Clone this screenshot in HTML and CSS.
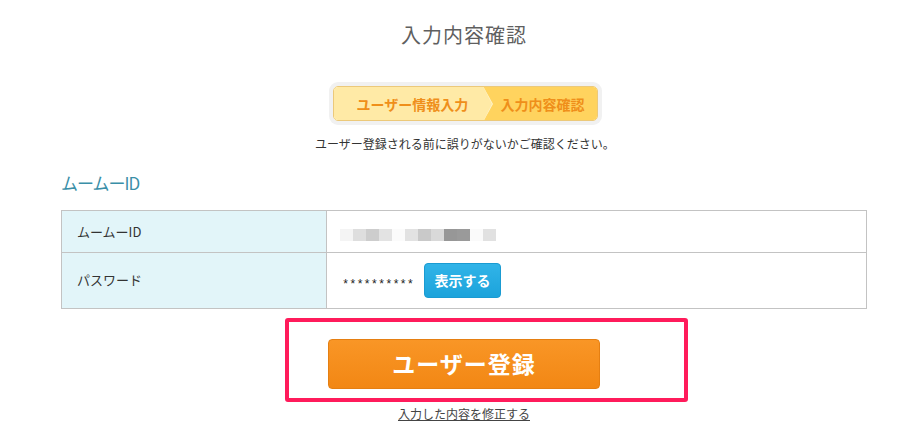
FILE: index.html
```html
<!DOCTYPE html>
<html lang="ja">
<head>
<meta charset="utf-8">
<title>入力内容確認</title>
<link rel="stylesheet" href="styles.css">
</head>
<body>
<div class="page">
  <h1 class="title">入力内容確認</h1>
  <div class="steps-wrap">
    <div class="steps">
      <div class="step step-done">ユーザー情報入力</div>
      <div class="step step-current">入力内容確認</div>
    </div>
  </div>
  <p class="lead">ユーザー登録される前に誤りがないかご確認ください。</p>
  <h2 class="section-title">ムームーID</h2>
  <table class="confirm">
    <tr class="row-id">
      <th>ムームーID</th>
      <td>
        <div class="blur">
          <span class="px" style="background:#f4f4f4"></span><span class="px" style="background:#dedede"></span><span class="px" style="background:#cdcdcd"></span><span class="px" style="background:#e3e3e3"></span><span class="px" style="background:#fbfbfb"></span><span class="px" style="background:#e2e2e2"></span><span class="px" style="background:#c9c9c9"></span><span class="px" style="background:#d9d9d9"></span><span class="px" style="background:#979797"></span><span class="px" style="background:#9a9a9a"></span><span class="px" style="background:#fafafa"></span><span class="px" style="background:#e1e1e1"></span>
        </div>
      </td>
    </tr>
    <tr class="row-pw">
      <th>パスワード</th>
      <td>
        <div class="pw">
          <span class="stars">**********</span>
          <button class="btn-show" type="button">表示する</button>
        </div>
      </td>
    </tr>
  </table>
  <div class="actions">
    <div class="highlight"></div>
    <button class="btn-register" type="button">ユーザー登録</button>
    <a class="back-link" href="#">入力した内容を修正する</a>
  </div>
</div>
</body>
</html>
```

FILE: styles.css
```css
* { box-sizing: border-box; }
body {
  margin: 0;
  background: #fff;
  font-family: "Noto Sans CJK JP", "Noto Sans", sans-serif;
  color: #333;
}
.page {
  width: 806px;
  margin-left: 61px;
}
.title {
  margin: 0;
  padding-top: 25px;
  font-size: 20px;
  line-height: 20px;
  font-weight: normal;
  letter-spacing: 1px;
  color: #5f5f5f;
  text-align: center;
}
.steps-wrap {
  display: flex;
  justify-content: center;
  margin-top: 41px;
  padding-left: 2px;
}
.steps {
  display: flex;
  height: 35px;
  border: 1px solid #ecc97a;
  border-radius: 5px;
  box-shadow: 0 0 0 4px #f1f1f1;
  overflow: hidden;
}
.step {
  display: flex;
  align-items: center;
  font-size: 14px;
  font-weight: bold;
  color: #ef8f1a;
  white-space: nowrap;
}
.step-done {
  position: relative;
  width: 149px;
  padding-left: 23px;
  background: #ffeaa6;
  z-index: 1;
}
.step-done::before,
.step-done::after {
  content: "";
  position: absolute;
  top: -1px;
  border-style: solid;
  border-color: transparent;
}
.step-done::before {
  right: -10px;
  border-width: 18px 0 18px 10px;
  border-left-color: #fff4cf;
}
.step-done::after {
  right: -9px;
  border-width: 18px 0 18px 9px;
  border-left-color: #ffeaa6;
}
.step-current {
  width: 114px;
  padding-left: 18px;
  background: #ffd35e;
}
.lead {
  margin: 15px 0 0;
  font-size: 12px;
  line-height: 16px;
  text-align: center;
  padding-left: 2px;
}
.section-title {
  margin: 21px 0 0;
  font-size: 17px;
  line-height: 20px;
  font-weight: normal;
  color: #3a8fa8;
  letter-spacing: -1px;
}
.confirm {
  margin-top: 17px;
  width: 806px;
  border-collapse: collapse;
}
.confirm th,
.confirm td {
  border: 1px solid #c3c3c3;
  padding: 0;
  font-size: 13px;
  font-weight: normal;
  text-align: left;
  vertical-align: middle;
}
.confirm th {
  width: 265px;
  background: #e2f5f9;
  padding-left: 15px;
  color: #333;
}
.confirm td {
  padding-left: 13px;
}
.row-id th, .row-id td { height: 42px; }
.row-pw th, .row-pw td { height: 56px; }
.row-pw th { padding-bottom: 2px; }
.blur {
  display: flex;
  margin-top: 6px;
}
.px {
  display: block;
  width: 13px;
  height: 12px;
}
.pw {
  display: flex;
  align-items: center;
  gap: 10px;
  padding-left: 2px;
}
.stars {
  font-family: "Liberation Mono", monospace;
  font-size: 12px;
  line-height: 12px;
  color: #222;
  padding-top: 8px;
}
.btn-show {
  width: 77px;
  height: 35px;
  padding: 0 0 2px;
  border: 1px solid #1a9bd2;
  border-radius: 4px;
  background: linear-gradient(#31b4e8, #1ca3db);
  color: #fff;
  font-family: inherit;
  font-size: 14px;
  font-weight: bold;
}
.actions {
  position: relative;
  display: flex;
  flex-direction: column;
  align-items: center;
  padding-top: 30px;
}
.highlight {
  position: absolute;
  left: 224px;
  top: 9px;
  width: 403px;
  height: 84px;
  border: 4px solid #ff1b5b;
  border-radius: 3px;
}
.btn-register {
  width: 272px;
  height: 50px;
  padding: 0 0 2px;
  border: 1px solid #e57f12;
  border-radius: 4px;
  background: linear-gradient(#f99626, #f28714);
  color: #fff;
  font-family: inherit;
  font-size: 23px;
  font-weight: bold;
  letter-spacing: 1px;
}
.back-link {
  margin-top: 17px;
  font-size: 12px;
  line-height: 16px;
  color: #444;
  text-decoration: underline;
}
```
